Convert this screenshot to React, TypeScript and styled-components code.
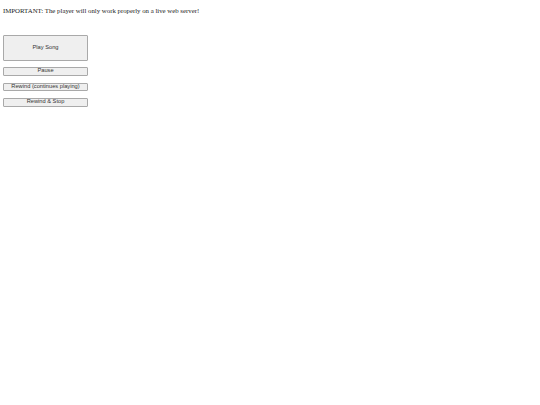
import React from "react";
import styled, { createGlobalStyle } from "styled-components";

const GlobalStyle = createGlobalStyle`
  html, body {
    margin: 0;
    padding: 0;
    background: #fff;
  }
  body {
    padding: 3px;
    font-family: "Liberation Serif", "Times New Roman", serif;
  }
`;

const Notice = styled.p`
  margin: 4px 0 0 0;
  font-size: 6.8px;
  line-height: 8px;
  color: #222;
`;

const Controls = styled.div`
  display: flex;
  flex-direction: column;
  align-items: flex-start;
  margin-top: 20px;
`;

const Button = styled.button<{ $big?: boolean }>`
  box-sizing: border-box;
  width: 85px;
  height: ${(p) => (p.$big ? "26px" : "8.5px")};
  margin-bottom: ${(p) => (p.$big ? "6px" : "7px")};
  padding: 0;
  font-family: "Liberation Sans", Arial, sans-serif;
  font-size: 5.7px;
  line-height: 1;
  color: #333;
  background: #efefef;
  border: 0.7px solid #a9a9a9;
  border-radius: 1px;
  cursor: pointer;
`;

export default function App() {
  return (
    <>
      <GlobalStyle />
      <Notice>IMPORTANT: The player will only work properly on a live web server!</Notice>
      <Controls>
        <Button $big>Play Song</Button>
        <Button>Pause</Button>
        <Button>Rewind (continues playing)</Button>
        <Button>Rewind &amp; Stop</Button>
      </Controls>
    </>
  );
}
